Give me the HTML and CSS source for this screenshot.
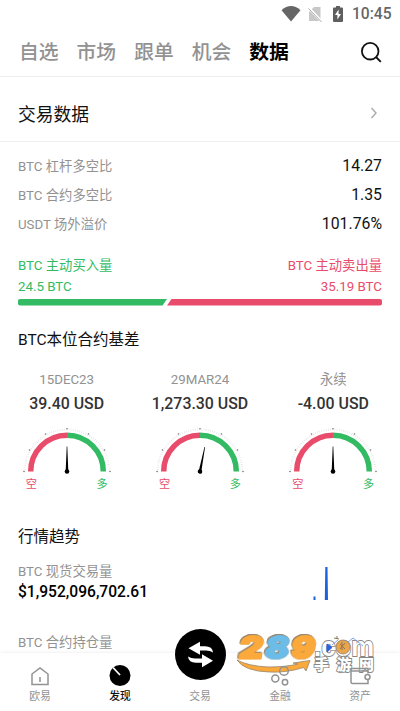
FILE: index.html
```html
<!DOCTYPE html>
<html lang="zh-CN">
<head>
  <meta charset="UTF-8" />
  <meta name="viewport" content="width=device-width, initial-scale=1.0"/>
  <title>交易数据</title>
  <link rel="stylesheet" href="styles.css">
</head>
<body>
  <!-- shared gauge dial -->
  <svg class="defs" width="0" height="0">
    <defs>
      <g id="dial">
        <path d="M1.5 44 A42.500 42.500 0 0 1 86.5 44" fill="none" stroke="#dedede" stroke-width="2" stroke-dasharray="0.6 1.6"/>
        <path d="M7.7 43.500 A36.300 36.300 0 0 1 44 7.200" fill="none" stroke="#e94b6b" stroke-width="5.5"/>
        <path d="M44 7.200 A36.300 36.300 0 0 1 80.300 43.500" fill="none" stroke="#33bb63" stroke-width="5.5"/>
        <g fill="#777">
          <circle cx="1" cy="43.5" r="0.8"/><circle cx="6.5" cy="22" r="0.8"/><circle cx="22.5" cy="6" r="0.8"/>
          <circle cx="44" cy="0.8" r="0.8"/><circle cx="65.5" cy="6" r="0.8"/><circle cx="81.5" cy="22" r="0.8"/><circle cx="87" cy="43.5" r="0.8"/>
        </g>
      </g>
      <g id="needle"><path d="M43.7 18.5 h0.6 L45.3 43 h-2.6z"/><circle cx="44" cy="43.5" r="2.3"/></g>
    </defs>
  </svg>

  <div class="status">
    <svg class="wifi" width="20" height="16" viewBox="0 0 20 16"><path d="M0.5 4.2 Q10 -4 19.5 4.2 L10 15.5z" fill="#666"/></svg>
    <svg class="sim" width="15" height="17" viewBox="0 0 15 17"><path d="M6 1h6.5v14H1V6z" fill="#c8c8c8"/><path d="M0 1.2 L14 15.8" stroke="#fff" stroke-width="2.6"/><path d="M0.5 2.5 L13.5 16" stroke="#aaa" stroke-width="1"/></svg>
    <svg class="battery" width="10" height="16" viewBox="0 0 10 16"><path d="M3 0h4v1.5h2q1 0 1 1V15q0 1-1 1H1q-1 0-1-1V2.500q0-1 1-1h2z" fill="#5f5f5f"/><path d="M5.600 3.500L2 9h2.400v4.500L8 8H5.600z" fill="#fff"/></svg>
    <span class="time">10:45</span>
  </div>

  <nav class="tabs">
    <span>自选</span><span>市场</span><span>跟单</span><span>机会</span><span class="active">数据</span>
    <svg class="search" width="22" height="22" viewBox="0 0 22 22"><circle cx="10.200" cy="9.200" r="8.300"/><path d="M16 15L20.800 19.800"/></svg>
  </nav>

  <div class="title-row">
    <h1>交易数据</h1>
    <svg width="8" height="12" viewBox="0 0 8 12"><path d="M1.500 1 L6 6 L1.500 11"/></svg>
  </div>

  <main>
    <div class="ratios">
      <div class="ratio"><span>BTC 杠杆多空比</span><b>14.27</b></div>
      <div class="ratio"><span>BTC 合约多空比</span><b>1.35</b></div>
      <div class="ratio"><span>USDT 场外溢价</span><b>101.76%</b></div>
    </div>

    <div class="volume">
      <div class="buy"><p>BTC 主动买入量</p><p class="amount">24.5 BTC</p></div>
      <div class="sell"><p>BTC 主动卖出量</p><p class="amount">35.19 BTC</p></div>
    </div>
    <svg class="volume-bar" width="364" height="7" viewBox="0 0 364 7">
      <path d="M2 0H149L144.500 6.500H2Q0 6.500 0 4.500V2Q0 0 2 0z" fill="#33bb63"/>
      <path d="M153.500 0H362Q364 0 364 2V4.500Q364 6.500 362 6.500H149z" fill="#e94b6b"/>
    </svg>

    <h2 class="basis-title">BTC本位合约基差</h2>
    <div class="gauges">
      <div class="gauge">
        <p class="date">15DEC23</p>
        <p class="price">39.40 USD</p>
        <svg width="88" height="47" viewBox="0 0 88 47"><use href="#dial"/><use href="#needle"/></svg>
        <div class="ends"><span class="short">空</span><span class="long">多</span></div>
      </div>
      <div class="gauge">
        <p class="date">29MAR24</p>
        <p class="price">1,273.30 USD</p>
        <svg width="88" height="47" viewBox="0 0 88 47"><use href="#dial"/><use href="#needle" transform="rotate(11 44 43.5)"/></svg>
        <div class="ends"><span class="short">空</span><span class="long">多</span></div>
      </div>
      <div class="gauge">
        <p class="date">永续</p>
        <p class="price">-4.00 USD</p>
        <svg width="88" height="47" viewBox="0 0 88 47"><use href="#dial"/><use href="#needle"/></svg>
        <div class="ends"><span class="short">空</span><span class="long">多</span></div>
      </div>
    </div>

    <h2 class="trend-title">行情趋势</h2>
    <div class="trend">
      <div>
        <p class="label">BTC 现货交易量</p>
        <p class="total">$1,952,096,702.61</p>
      </div>
      <svg width="70" height="36" viewBox="0 0 70 36"><path d="M1.500 31.500h2v3.500h-2zM13.300 2h2.200l0.500 33h-3.200z" fill="#1c62e0"/></svg>
    </div>
    <p class="label second">BTC 合约持仓量</p>
  </main>

  <footer class="bottom-nav">
    <div class="item">
      <svg width="20" height="20" viewBox="0 0 20 20"><path d="M2 7L10 1L18 7V17.500H2zM10 10V15" fill="none" stroke="#929292" stroke-width="1.500"/></svg>
      <span>欧易</span>
    </div>
    <div class="item active">
      <svg width="22" height="22" viewBox="0 0 22 22"><circle cx="11" cy="10.500" r="10.500"/><path d="M4 2.500L11 10" stroke="#fff" stroke-width="1.800"/></svg>
      <span>发现</span>
    </div>
    <div class="item trade">
      <svg width="51" height="51" viewBox="0 0 51 51"><circle cx="25.500" cy="25.500" r="25.500"/><path d="M13.500 19.300L25 12.800V17.300H30Q37.500 17.300 38 23.500Q35 21.500 31 21.500H25V25.800z" fill="#fff"/><path d="M38 31.700L27 38.200V33.700H21Q13.500 33.700 13 27.500Q16 29.500 20 29.500H27V25.200z" fill="#fff"/></svg>
      <span>交易</span>
    </div>
    <div class="item">
      <svg width="20" height="20" viewBox="0 0 20 20"></svg>
      <span>金融</span>
    </div>
    <div class="item">
      <svg width="22" height="20" viewBox="0 0 22 20"></svg>
      <span>资产</span>
    </div>
  </footer>

  <svg class="watermark" width="144" height="54" viewBox="0 0 144 54">
    <path d="M1 26Q12 32 32 33Q50 33 62 30L57 29L74 26.500L70 37L67.500 33.500Q50 39 33 38Q8 37 1 26z" fill="#fca93c" stroke="#96856c" stroke-width="0.800"/>
    <g class="digits" transform="translate(5 0) skewX(-10)">
      <text x="1" y="25" textLength="24" fill="#fca93c" stroke="#fca93c" lengthAdjust="spacingAndGlyphs">2</text>
      <text x="27" y="25" textLength="24" fill="#6cbce8" stroke="#6cbce8" lengthAdjust="spacingAndGlyphs">8</text>
      <text x="53" y="25" textLength="24" fill="#fca93c" stroke="#fca93c" lengthAdjust="spacingAndGlyphs">9</text>
    </g>
    <text class="dotcom" x="78" y="22" textLength="60" lengthAdjust="spacingAndGlyphs">.com</text>
    <circle cx="107" cy="13" r="7" fill="#eaa44c" stroke="#96856c" stroke-width="0.800"/>
    <path d="M98 4l5 1M101 2v3M104 10l5 5M109 9l-5 6M106 8v8" stroke="#8d7754" fill="none"/>
    <path d="M91 10v8l5-4.500z" stroke="#2864df" fill="#2864df"/>
    <path d="M96 11l6-5M112 8l5-4l10 8" stroke="#7fa4ea" fill="none"/>
    <text class="site" x="78" y="35.500" textLength="60">手游网</text>
    <!-- finance and assets tab icons, showing through the mark -->
    <g fill="none" stroke="#929292" stroke-width="1.500">
      <circle cx="48" cy="37" r="4.300"/><circle cx="39.300" cy="44.500" r="3.500"/><circle cx="49" cy="48.300" r="2.700"/>
      <path d="M132 39.500V34.500H116.500Q115 34.500 115 36.500V48Q115 49.500 116.500 49.500H132V46M115 37H132"/>
      <circle cx="131.500" cy="43" r="2.500"/>
    </g>
  </svg>
</body>
</html>
```
FILE: styles.css
```css
* {
  box-sizing: border-box;
}

body {
  width: 400px;
  height: 711px;
  margin: 0;
  overflow: hidden;
  position: relative;
  background: #fff;
  color: #111;
  font-family: Roboto, "Noto Sans CJK SC", sans-serif;
}

p, h1, h2 {
  margin: 0;
  font-weight: 400;
}

svg {
  display: block;
  flex: none;
}

.defs {
  position: absolute;
}

.status {
  display: flex;
  height: 28px;
  align-items: center;
  justify-content: flex-end;
  padding-right: 9px;
}

.sim {
  margin-left: 7px;
}

.battery {
  margin-left: 10px;
}

.time {
  width: 39px;
  margin-left: 9px;
  font-size: 15.6px;
  font-weight: 500;
  color: #666;
}

.tabs {
  display: flex;
  height: 49px;
  align-items: center;
  gap: 18px;
  padding: 1px 18px 0 19px;
  border-bottom: 1px solid #eee;
  font-size: 19.8px;
  font-weight: 500;
  line-height: 28px;
  color: #929292;
}

.tabs .active {
  color: #000;
  font-weight: 700;
}

.search {
  margin-left: auto;
  fill: none;
  stroke: #111;
  stroke-width: 1.8;
}

.title-row {
  display: flex;
  height: 65px;
  align-items: center;
  justify-content: space-between;
  padding: 8px 22px 0 18px;
  border-bottom: 1px solid #eee;
}

.title-row h1 {
  font-size: 17.8px;
}

.title-row path {
  fill: none;
  stroke: #aaa;
  stroke-width: 1.4;
}

main {
  padding: 9px 18px 0;
}

.ratio {
  display: flex;
  height: 29px;
  align-items: center;
  justify-content: space-between;
  font-size: 13.3px;
  color: #929292;
}

.ratio b {
  font-size: 15.8px;
  font-weight: 400;
  color: #111;
}

.volume {
  display: flex;
  justify-content: space-between;
  margin-top: 17px;
  font-size: 13.3px;
  line-height: 21px;
}

.buy, .long {
  color: #33bb63;
}

.sell {
  color: #e94b6b;
  text-align: right;
}

.short {
  color: #e94b6b;
}

.volume-bar {
  margin-top: 2px;
}

h2 {
  font-size: 15.5px;
  line-height: 24px;
}

.basis-title {
  margin-top: 22px;
}

.gauges {
  display: grid;
  grid-template-columns: repeat(3, 133.333px);
  margin: 16px -18px 0;
}

.gauge {
  display: flex;
  flex-direction: column;
  align-items: center;
}

.date {
  font-size: 13.3px;
  line-height: 24px;
  color: #929292;
}

.price {
  margin-bottom: 12px;
  font-size: 15.9px;
  font-weight: 500;
  line-height: 24px;
  color: #333;
}

.ends {
  display: flex;
  width: 82px;
  justify-content: space-between;
  padding-top: 1px;
  font-size: 11.2px;
  line-height: 18px;
}

.trend-title {
  margin-top: 31px;
}

.trend {
  display: flex;
  justify-content: space-between;
  margin-top: 12px;
}

.trend svg {
  margin-top: 4px;
}

.label {
  font-size: 13.3px;
  line-height: 22px;
  color: #929292;
}

.total {
  font-size: 15.6px;
  font-weight: 500;
  line-height: 19px;
  color: #000;
}

.second {
  margin-top: 30px;
}

.bottom-nav {
  position: absolute;
  left: 0;
  right: 0;
  bottom: 0;
  display: grid;
  grid-template-columns: repeat(5, 80px);
  grid-template-rows: 58px;
  height: 58px;
  background: #fff;
  box-shadow: 0 -1px 3px rgba(0, 0, 0, 0.06);
}

.item {
  display: flex;
  flex-direction: column;
  align-items: center;
  justify-content: flex-end;
  gap: 1px;
  padding-bottom: 5px;
  font-size: 10.8px;
  line-height: 18px;
  color: #929292;
}

.item.active {
  color: #111;
  font-weight: 500;
}

.trade {
  gap: 8px;
}

.watermark {
  position: absolute;
  left: 236px;
  top: 634px;
  overflow: visible;
}

.digits {
  font: 900 31px Inter, sans-serif;
  stroke-width: 2;
  stroke-linejoin: round;
  filter: drop-shadow(0.4px 0.4px 0 #96856c) drop-shadow(-0.4px -0.4px 0 #96856c);
}

.dotcom,
.site {
  fill: #fff;
  stroke: #888;
  stroke-width: 1.8;
  paint-order: stroke;
}

.dotcom {
  font: 700 28px "Liberation Sans", sans-serif;
}

.site {
  font: 900 15px "Noto Sans CJK SC", sans-serif;
}
```
